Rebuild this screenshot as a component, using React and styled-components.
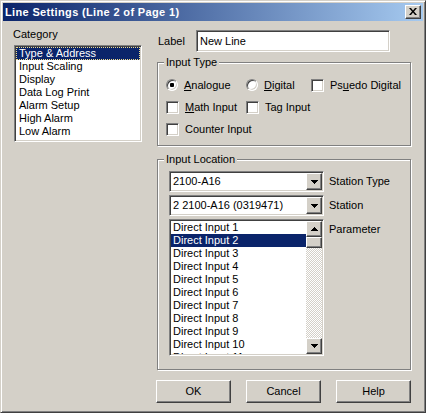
import React from "react";
import styled, { createGlobalStyle, css } from "styled-components";

const GlobalStyle = createGlobalStyle`
  html, body {
    margin: 0;
    padding: 0;
    background: #d4d0c8;
  }
  body {
    font-family: "Liberation Sans", Arial, sans-serif;
    font-size: 11px;
    color: #000;
  }
  * {
    box-sizing: border-box;
  }
`;

const raised = css`
  background: #d4d0c8;
  border: 1px solid;
  border-color: #fff #404040 #404040 #fff;
  box-shadow: inset -1px -1px 0 #808080, inset 1px 1px 0 #d4d0c8;
`;

const sunken = css`
  background: #fff;
  border: 1px solid;
  border-color: #808080 #fff #fff #808080;
  box-shadow: inset 1px 1px 0 #404040, inset -1px -1px 0 #d4d0c8;
`;

const categories = [
  "Type & Address",
  "Input Scaling",
  "Display",
  "Data Log Print",
  "Alarm Setup",
  "High Alarm",
  "Low Alarm",
];

const parameters = Array.from({ length: 11 }, (_, i) => `Direct Input ${i + 1}`);

function Arrow({ up }) {
  return (
    <svg width="7" height="4" viewBox="0 0 7 4" shapeRendering="crispEdges">
      <path d={up ? "M3.5 0L7 4H0z" : "M0 0h7L3.5 4z"} fill="#000" />
    </svg>
  );
}

function CloseGlyph() {
  return (
    <svg width="8" height="7" viewBox="0 0 8 7">
      <path d="M0 0h2l2 2.4L6 0h2L5 3.5 8 7H6L4 4.6 2 7H0l3-3.5z" fill="#000" />
    </svg>
  );
}

export default function App() {
  return (
    <>
      <GlobalStyle />
      <Window>
        <TitleBar>
          <TitleText>Line Settings (Line 2 of Page 1)</TitleText>
          <CloseButton>
            <CloseGlyph />
          </CloseButton>
        </TitleBar>

        <Body>
          <LeftColumn>
            <CategoryLabel>Category</CategoryLabel>
            <CategoryList>
              {categories.map((c, i) => (
                <CategoryItem key={c} $selected={i === 0}>
                  {c}
                </CategoryItem>
              ))}
            </CategoryList>
          </LeftColumn>

          <RightColumn>
            <LabelRow>
              <FieldLabel>Label</FieldLabel>
              <TextInput>New Line</TextInput>
            </LabelRow>

            <TypeGroup>
              <Legend>Input Type</Legend>
              <Option>
                <Radio $checked />
                <span>
                  <u>A</u>nalogue
                </span>
              </Option>
              <Option>
                <Radio />
                <span>
                  <u>D</u>igital
                </span>
              </Option>
              <Option>
                <Check />
                <span>
                  Ps<u>u</u>edo Digital
                </span>
              </Option>
              <Option>
                <Check />
                <span>
                  <u>M</u>ath Input
                </span>
              </Option>
              <Option>
                <Check />
                <span>Tag Input</span>
              </Option>
              <Option />
              <Option>
                <Check />
                <span>Counter Input</span>
              </Option>
            </TypeGroup>

            <LocationGroup>
              <Legend>Input Location</Legend>
              <Combo>
                <ComboText>2100-A16</ComboText>
                <DropButton>
                  <Arrow />
                </DropButton>
              </Combo>
              <SideLabel>Station Type</SideLabel>
              <Combo>
                <ComboText>2 2100-A16 (0319471)</ComboText>
                <DropButton>
                  <Arrow />
                </DropButton>
              </Combo>
              <SideLabel>Station</SideLabel>
              <ParamList>
                <ParamItems>
                  {parameters.map((p, i) => (
                    <ParamItem key={p} $selected={i === 1}>
                      {p}
                    </ParamItem>
                  ))}
                </ParamItems>
                <ScrollBar>
                  <ScrollButton>
                    <Arrow up />
                  </ScrollButton>
                  <Thumb />
                  <Track />
                  <ScrollButton>
                    <Arrow />
                  </ScrollButton>
                </ScrollBar>
              </ParamList>
              <SideLabel $top>Parameter</SideLabel>
            </LocationGroup>
          </RightColumn>
        </Body>

        <ButtonRow>
          <PushButton>OK</PushButton>
          <PushButton>Cancel</PushButton>
          <PushButton>Help</PushButton>
        </ButtonRow>
      </Window>
    </>
  );
}

const Window = styled.div`
  width: 426px;
  height: 413px;
  background: #d4d0c8;
  border: 1px solid;
  border-color: #d4d0c8 #404040 #404040 #d4d0c8;
  box-shadow: inset 1px 1px 0 #fff, inset -1px -1px 0 #808080;
  padding: 2px;
  display: flex;
  flex-direction: column;
`;

const TitleBar = styled.div`
  height: 18px;
  background: linear-gradient(to right, #0a246a, #a6caf0);
  display: flex;
  align-items: center;
  justify-content: space-between;
  padding: 0 2px;
`;

const TitleText = styled.span`
  color: #fff;
  font-weight: bold;
  letter-spacing: 0.35px;
  line-height: 14px;
`;

const CloseButton = styled.div`
  ${raised};
  width: 16px;
  height: 14px;
  display: flex;
  align-items: center;
  justify-content: center;
  padding-bottom: 1px;
`;

const Body = styled.div`
  display: grid;
  grid-template-columns: 128px 254px;
  column-gap: 15px;
  padding: 7px 12px 0 11px;
`;

const LeftColumn = styled.div`
  display: flex;
  flex-direction: column;
`;

const CategoryLabel = styled.div`
  line-height: 13px;
  margin-left: -1px;
`;

const CategoryList = styled.div`
  ${sunken};
  margin-top: 4px;
  height: 97px;
  padding: 1px;
`;

const CategoryItem = styled.div`
  line-height: 11px;
  height: 13px;
  padding-left: 2px;
  border: 1px solid transparent;
  white-space: nowrap;
  ${(p) =>
    p.$selected &&
    css`
      background: #0a246a;
      color: #fff;
      border: 1px dotted #f0dc8c;
    `}
`;

const RightColumn = styled.div`
  display: flex;
  flex-direction: column;
`;

const LabelRow = styled.div`
  display: flex;
  align-items: center;
  margin-top: 2px;
  height: 22px;
`;

const FieldLabel = styled.span`
  width: 39px;
  padding-left: 1px;
`;

const TextInput = styled.div`
  ${sunken};
  width: 194px;
  height: 22px;
  line-height: 20px;
  padding-left: 3px;
`;

const Group = styled.div`
  position: relative;
  border: 1px solid #808080;
  box-shadow: inset 1px 1px 0 #fff, 1px 1px 0 #fff;
`;

const Legend = styled.span`
  position: absolute;
  top: -7px;
  left: 6px;
  padding: 0 2px;
  line-height: 13px;
  background: #d4d0c8;
`;

const TypeGroup = styled(Group)`
  margin-top: 10px;
  padding: 11px 0 5px 8px;
  display: grid;
  grid-template-columns: 80px 65px auto;
  grid-auto-rows: 22px;
`;

const Option = styled.div`
  display: flex;
  align-items: center;
  gap: 6px;
  white-space: nowrap;
`;

const Radio = styled.span`
  position: relative;
  width: 12px;
  height: 12px;
  border-radius: 50%;
  background: #fff;
  border: 1px solid;
  border-color: #808080 #fff #fff #808080;
  box-shadow: inset 1px 1px 0 #404040, inset -1px -1px 0 #d4d0c8;
  flex: none;
  &::after {
    content: "";
    display: ${(p) => (p.$checked ? "block" : "none")};
    position: absolute;
    left: 3px;
    top: 3px;
    width: 4px;
    height: 4px;
    border-radius: 1px;
    background: #000;
  }
`;

const Check = styled.span`
  ${sunken};
  width: 13px;
  height: 13px;
  flex: none;
`;

const LocationGroup = styled(Group)`
  margin-top: 13px;
  padding: 11px 0 13px 11px;
  display: grid;
  grid-template-columns: 155px auto;
  grid-template-rows: 21px 21px 137px;
  column-gap: 5px;
  row-gap: 3px;
`;

const Combo = styled.div`
  ${sunken};
  padding: 1px;
  display: flex;
`;

const ComboText = styled.div`
  flex: 1;
  line-height: 17px;
  padding-left: 2px;
  white-space: nowrap;
`;

const DropButton = styled.div`
  ${raised};
  width: 16px;
  display: flex;
  align-items: center;
  justify-content: center;
`;

const SideLabel = styled.div`
  white-space: nowrap;
  line-height: 13px;
  align-self: ${(p) => (p.$top ? "start" : "center")};
  padding-top: ${(p) => (p.$top ? "4px" : "0")};
`;

const ParamList = styled.div`
  ${sunken};
  padding: 1px;
  display: flex;
  overflow: hidden;
`;

const ParamItems = styled.div`
  flex: 1;
  overflow: hidden;
`;

const ParamItem = styled.div`
  height: 13px;
  line-height: 13px;
  padding-left: 2px;
  white-space: nowrap;
  ${(p) =>
    p.$selected &&
    css`
      background: #0a246a;
      color: #fff;
    `}
`;

const ScrollBar = styled.div`
  width: 16px;
  display: flex;
  flex-direction: column;
`;

const ScrollButton = styled.div`
  ${raised};
  height: 16px;
  flex: none;
  display: flex;
  align-items: center;
  justify-content: center;
`;

const Thumb = styled.div`
  ${raised};
  height: 11px;
  flex: none;
`;

const Track = styled.div`
  flex: 1;
  background-color: #fff;
  background-image: repeating-conic-gradient(#d4d0c8 0 25%, #fff 0 50%);
  background-size: 2px 2px;
`;

const ButtonRow = styled.div`
  display: flex;
  justify-content: flex-end;
  gap: 15px;
  padding-right: 12px;
  margin-top: 10px;
`;

const PushButton = styled.div`
  ${raised};
  width: 75px;
  height: 23px;
  line-height: 21px;
  text-align: center;
`;
